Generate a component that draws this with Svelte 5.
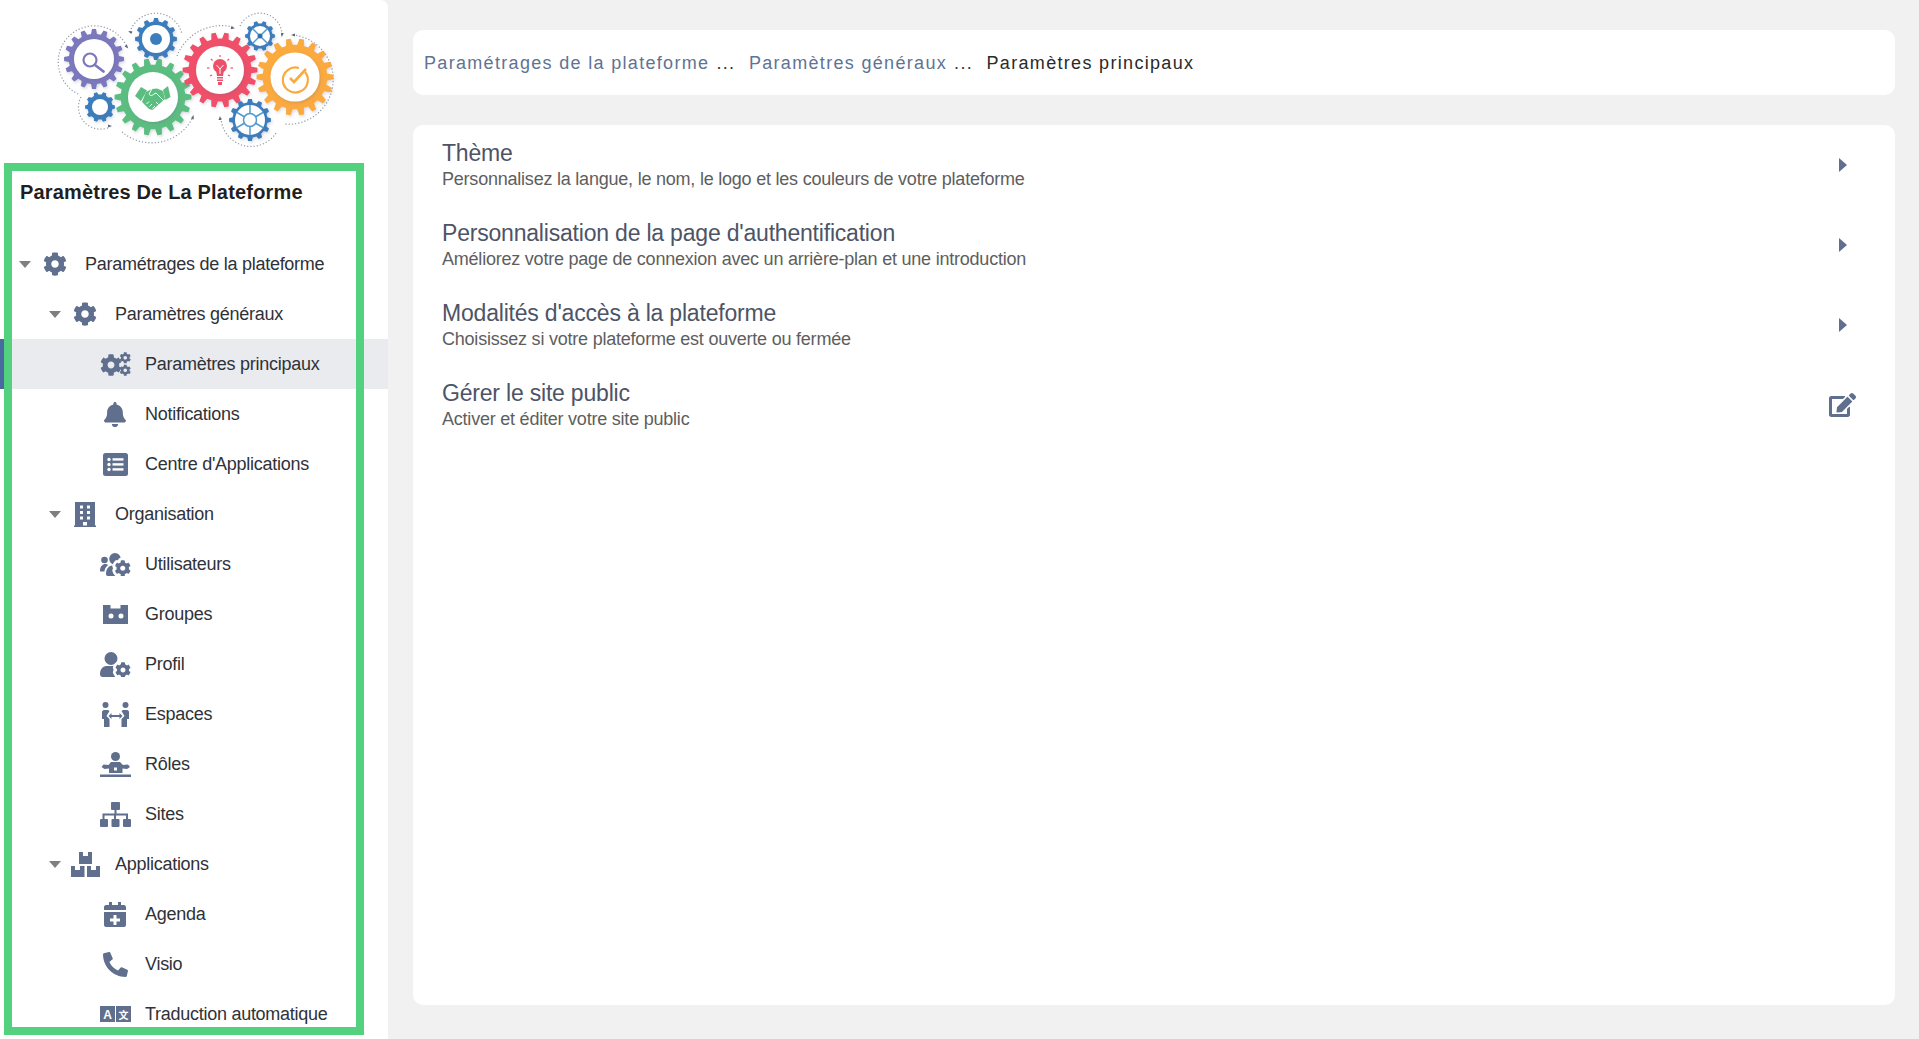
<script lang="ts">
    const COG = 'M487.4 315.7l-42.6-24.6c4.3-23.2 4.3-47 0-70.2l42.6-24.6c4.9-2.8 7.1-8.6 5.5-14-11.1-35.6-30-67.8-54.7-94.6-3.8-4.1-10-5.1-14.8-2.3L380.8 110c-17.9-15.4-38.5-27.3-60.8-35.1V25.8c0-5.6-3.9-10.5-9.4-11.7-36.7-8.2-74.3-7.8-109.2 0-5.5 1.2-9.4 6.1-9.4 11.7V75c-22.2 7.9-42.8 19.8-60.8 35.1L88.7 85.5c-4.9-2.8-11-1.9-14.8 2.3-24.7 26.7-43.6 58.9-54.7 94.6-1.7 5.4.6 11.2 5.5 14L67.3 221c-4.3 23.2-4.3 47 0 70.2l-42.6 24.6c-4.9 2.8-7.1 8.6-5.5 14 11.1 35.6 30 67.8 54.7 94.6 3.8 4.1 10 5.1 14.8 2.3l42.6-24.6c17.9 15.4 38.5 27.3 60.8 35.1v49.2c0 5.6 3.9 10.5 9.4 11.7 36.7 8.2 74.3 7.8 109.2 0 5.5-1.2 9.4-6.1 9.4-11.7v-49.2c22.2-7.9 42.8-19.8 60.8-35.1l42.6 24.6c4.9 2.8 11 1.9 14.8-2.3 24.7-26.7 43.6-58.9 54.7-94.6 1.5-5.5-.7-11.3-5.6-14.1zM256 336c-44.1 0-80-35.9-80-80s35.9-80 80-80 80 35.9 80 80-35.9 80-80 80z';
    const BELL = 'M224 512c35.32 0 63.97-28.65 63.97-64H160.03c0 35.35 28.65 64 63.97 64zm215.39-149.71c-19.32-20.76-55.47-51.99-55.47-154.29 0-77.7-54.48-139.9-127.94-155.16V32c0-17.67-14.32-32-31.98-32s-31.98 14.33-31.98 32v20.84C118.56 68.1 64.08 130.3 64.08 208c0 102.3-36.15 133.53-55.47 154.29-6 6.45-8.66 14.16-8.61 21.71.11 16.4 12.98 32 32.1 32h383.8c19.12 0 32-15.6 32.1-32 .05-7.55-2.61-15.27-8.61-21.71z';
    const PHONE = 'M497.39 361.8l-112-48a24 24 0 0 0-28 6.9l-49.6 60.6A370.66 370.66 0 0 1 130.6 204.11l60.6-49.6a23.94 23.94 0 0 0 6.9-28l-48-112A24.16 24.16 0 0 0 122.6.61l-104 24A24 24 0 0 0 0 48c0 256.5 207.9 464 464 464a24 24 0 0 0 23.4-18.6l24-104a24.29 24.29 0 0 0-14.01-27.6z';
    const EDIT = 'M402.6 83.2l90.2 90.2c3.8 3.8 3.8 10 0 13.8L274.4 405.6l-92.8 10.3c-12.4 1.4-22.9-9.1-21.5-21.5l10.3-92.8L388.8 83.2c3.8-3.8 10-3.8 13.8 0zm162-22.9l-48.8-48.8c-15.2-15.2-39.9-15.2-55.2 0l-35.4 35.4c-3.8 3.8-3.8 10 0 13.8l90.2 90.2c3.8 3.8 10 3.8 13.8 0l35.4-35.4c15.2-15.3 15.2-40 0-55.2zM384 346.2V448H64V128h229.8c3.2 0 6.2-1.3 8.5-3.5l40-40c7.6-7.6 2.2-20.5-8.5-20.5H48C21.5 64 0 85.5 0 112v352c0 26.5 21.5 48 48 48h352c26.5 0 48-21.5 48-48V306.2c0-10.7-12.9-16-20.5-8.5l-40 40c-2.2 2.3-3.5 5.3-3.5 8.5z';

    // small cog placed at x,y with the given size, in icon units
    function cog(x: number, y: number, size: number, halo = false) {
        const s = size / 512;
        const extra = halo ? ' stroke="#fff" stroke-width="170" paint-order="stroke"' : '';
        return `<path transform="translate(${x} ${y}) scale(${s})" d="${COG}"${extra}/>`;
    }

    const icons: Record<string, { w: number; h: number; body: string }> = {
        cog: { w: 24, h: 24, body: cog(0, 0, 24) },
        cogs: { w: 31, h: 24, body: cog(0, 2, 22) + cog(19.5, 0, 11.5) + cog(19.5, 12.5, 11.5) },
        bell: { w: 22, h: 25, body: `<path transform="scale(.049)" d="${BELL}"/>` },
        list: {
            w: 25, h: 23,
            body: `<rect width="25" height="23" rx="2.5"/><g fill="#fff"><circle cx="6" cy="6.5" r="1.7"/><circle cx="6" cy="11.5" r="1.7"/><circle cx="6" cy="16.5" r="1.7"/><rect x="9.5" y="5.2" width="11" height="2.4"/><rect x="9.5" y="10.2" width="11" height="2.4"/><rect x="9.5" y="15.2" width="11" height="2.4"/></g>`
        },
        building: {
            w: 22, h: 25,
            body: `<path fill-rule="evenodd" d="M1 0h20v23.500h1V25H0v-1.500h1zM6 3.500v3h3v-3zm7 0v3h3v-3zM6 9v3h3V9zm7 0v3h3V9zM6 14.500v3h3v-3zm7 0v3h3v-3zM9 20v3.500h4V20z"/>`
        },
        users: {
            w: 31, h: 23,
            body: `<circle cx="15" cy="5.800" r="5.800"/><circle cx="4.500" cy="7" r="3.300"/><path d="M0 18c0-5 3-7 5-7 1.500 0 2.500.6 3 1.200C5.500 14 4.500 16.500 4.500 18.500H1.500C.5 18.500 0 18.500 0 18zM6 21c0-5 3-8.500 6-8.500h6c1.500 0 3 .8 3.500 1.500L19 23H8c-1.500 0-2-.8-2-2z"/>` + cog(14.500, 7, 16.500, true)
        },
        groups: {
            w: 25, h: 19,
            body: `<path fill-rule="evenodd" d="M0 0h7.500v3.500h10V0H25v19H0zM8 8.500a2.500 2.500 0 1 0 0 5 2.500 2.500 0 0 0 0-5zm10 0a2.500 2.500 0 1 0 0 5 2.500 2.500 0 0 0 0-5z"/>`
        },
        profile: {
            w: 31, h: 25,
            body: `<circle cx="11" cy="6.500" r="6.500"/><path d="M0 22c0-5.500 3.500-8 7-8h8c2 0 3.500.5 4.500 1.500L17.500 25H2.500C1 25 0 24 0 22z"/>` + cog(15, 10, 16, true)
        },
        spaces: {
            w: 29, h: 25,
            body: `<circle cx="4.500" cy="3" r="3"/><circle cx="24.500" cy="3" r="3"/><path d="M1 10c0-1 1-2 2-2h4l1.500 1-3 5 3 3V25H3v-8H1zM28 10c0-1-1-2-2-2h-4l-1.500 1 3 5-3 3V25H26v-8h2z"/><path d="M7.500 14l3-3v2h8v-2l3 3-3 3v-2h-8v2z" stroke="#fff" stroke-width="1.200" paint-order="stroke"/>`
        },
        roles: {
            w: 31, h: 25,
            body: `<circle cx="15.500" cy="4.500" r="4.500"/><path d="M11 10h9l3 3 5-.5 2 2.500-3 2-4.500-.5V21H9v-4.500L4.500 17l-3-2 2-2.500 5 .5z"/><rect x="14" y="15.500" width="3" height="3" fill="#fff"/><rect y="22.500" width="31" height="2.500"/>`
        },
        sites: {
            w: 31, h: 25,
            body: `<rect x="11" width="9" height="8" rx="1"/><rect y="17" width="8" height="8" rx="1"/><rect x="11.500" y="17" width="8" height="8" rx="1"/><rect x="23" y="17" width="8" height="8" rx="1"/><path d="M14.500 8h2v3.500h11.500V17h-2v-3.500h-10V17h-2v-3.500h-9.500V17h-2v-5.500h12z"/>`
        },
        apps: {
            w: 29, h: 25,
            body: `<path d="M8 0h4v4h5V0h4v12H8zM0 14h4v4h5v-4h4.500v11H0zM16 14h4v4h5v-4h4v11H16z"/>`
        },
        agenda: {
            w: 22, h: 25,
            body: `<path fill-rule="evenodd" d="M5 0h3v3h6V0h3v3h3c1 0 2 1 2 2v3H0V5c0-1 1-2 2-2h3zM0 10h22v13c0 1-1 2-2 2H2c-1 0-2-1-2-2zm9.500 3v3.500H6v3h3.500V23h3v-3.500H16v-3h-3.500V13z"/>`
        },
        phone: { w: 25, h: 25, body: `<path transform="scale(.0488)" d="${PHONE}"/>` },
        translate: {
            w: 31, h: 16,
            body: `<rect width="15" height="16"/><rect x="16" width="15" height="16"/><text x="7.500" y="13" text-anchor="middle" fill="#fff" font-size="12" font-weight="700" font-family="Liberation Sans, sans-serif">A</text><text x="23.500" y="12.500" text-anchor="middle" fill="#fff" font-size="10" font-weight="700" font-family="Noto Sans CJK SC, sans-serif">文</text>`
        }
    };

    const tree = [
        { label: 'Paramétrages de la plateforme', level: 0, icon: 'cog', open: true },
        { label: 'Paramètres généraux', level: 1, icon: 'cog', open: true },
        { label: 'Paramètres principaux', level: 2, icon: 'cogs', active: true },
        { label: 'Notifications', level: 2, icon: 'bell' },
        { label: "Centre d'Applications", level: 2, icon: 'list' },
        { label: 'Organisation', level: 1, icon: 'building', open: true },
        { label: 'Utilisateurs', level: 2, icon: 'users' },
        { label: 'Groupes', level: 2, icon: 'groups' },
        { label: 'Profil', level: 2, icon: 'profile' },
        { label: 'Espaces', level: 2, icon: 'spaces' },
        { label: 'Rôles', level: 2, icon: 'roles' },
        { label: 'Sites', level: 2, icon: 'sites' },
        { label: 'Applications', level: 1, icon: 'apps', open: true },
        { label: 'Agenda', level: 2, icon: 'agenda' },
        { label: 'Visio', level: 2, icon: 'phone' },
        { label: 'Traduction automatique', level: 2, icon: 'translate' }
    ];

    const settings = [
        { title: 'Thème', desc: 'Personnalisez la langue, le nom, le logo et les couleurs de votre plateforme' },
        { title: "Personnalisation de la page d'authentification", desc: 'Améliorez votre page de connexion avec un arrière-plan et une introduction' },
        { title: "Modalités d'accès à la plateforme", desc: 'Choisissez si votre plateforme est ouverte ou fermée' },
        { title: 'Gérer le site public', desc: 'Activer et éditer votre site public', edit: true }
    ];

    function gearPath(cx: number, cy: number, R: number, teeth: number) {
        const root = R * 0.84;
        const step = (Math.PI * 2) / teeth;
        let d = '';
        for (let i = 0; i < teeth; i++) {
            const a = i * step;
            const pts = [
                [root, a - step * 0.3],
                [R, a - step * 0.17],
                [R, a + step * 0.17],
                [root, a + step * 0.3]
            ];
            for (const [r, t] of pts) {
                d += `${d ? 'L' : 'M'}${(cx + r * Math.cos(t)).toFixed(2)} ${(cy + r * Math.sin(t)).toFixed(2)}`;
            }
        }
        return d + 'Z';
    }

    const gears = [
        { x: 94, y: 59, R: 30, r: 20, n: 16, c: '#7b78bd' },
        { x: 156, y: 39, R: 21, r: 14, n: 12, c: '#3b7dbd' },
        { x: 100, y: 107, R: 15, r: 8, n: 10, c: '#3b7dbd' },
        { x: 153, y: 97, R: 38.500, r: 25, n: 18, c: '#5cbd80' },
        { x: 220, y: 70, R: 37.500, r: 24, n: 18, c: '#ef5069' },
        { x: 260, y: 36, R: 15, r: 10, n: 10, c: '#3b7dbd' },
        { x: 295, y: 77, R: 38.500, r: 24.500, n: 18, c: '#fbaa3f' },
        { x: 250, y: 120, R: 21, r: 15, n: 12, c: '#3b7dbd' }
    ];

    // dotted arcs round the gears
    const arcs = [
        'M78 94A36 36 0 1 1 127 47',
        'M130 32A27 27 0 0 1 182 34',
        'M81 97A22 22 0 0 0 110 127',
        'M122 132A46 46 0 0 0 193 117',
        'M177 56A48 48 0 0 1 233 27',
        'M240 26A22 22 0 0 1 282 35',
        'M293 35A44 44 0 0 1 284 124',
        'M221 118A30 30 0 0 0 276 133'
    ];

    // little arrow heads at the arc ends: x, y, rotation
    const heads = [
        [127, 47, 50], [130, 32, 200], [282, 35, 100], [293, 35, 180],
        [233, 28, 10], [193, 117, 290], [220, 118, 270], [110, 126, 0]
    ];

    const spokes6 = [0, 60, 120, 180, 240, 300].map((d) => (d + 30) * Math.PI / 180);
    const spokes4 = [45, 135, 225, 315].map((d) => d * Math.PI / 180);
</script>

<div class="page">
    <aside class="sidebar">
        <div class="logo">
            <svg width="388" height="163" viewBox="0 0 388 163">
                <defs>
                    <filter id="soft" x="-20%" y="-20%" width="140%" height="140%">
                        <feDropShadow dx="1" dy="1.500" stdDeviation="1.500" flood-color="#5b6b8c" flood-opacity=".25" />
                    </filter>
                </defs>
                <g fill="none" stroke="#8f98a8" stroke-width="1.200" stroke-dasharray="1.200 2">
                    {#each arcs as d}
                        <path {d} />
                    {/each}
                </g>
                {#each heads as [x, y, r]}
                    <path d="M-2 -1.500L2 0L-2 1.500Z" fill="#5c6577" transform="translate({x} {y}) rotate({r})" />
                {/each}
                {#each gears as g}
                    <path d={gearPath(g.x, g.y, g.R, g.n)} fill={g.c} filter="url(#soft)" />
                    <circle cx={g.x} cy={g.y} r={g.r} fill="#fff" filter="url(#soft)" />
                {/each}

                <circle cx="156" cy="39" r="6" fill="#3b7dbd" />

                <!-- spoked gears -->
                <g stroke="#4f9ad0" stroke-width="1.500">
                    {#each spokes4 as a}
                        <line x1="260" y1="36" x2={260 + 11 * Math.cos(a)} y2={36 + 11 * Math.sin(a)} />
                    {/each}
                    {#each spokes6 as a}
                        <line x1={250 + 6 * Math.cos(a)} y1={120 + 6 * Math.sin(a)} x2={250 + 15 * Math.cos(a)} y2={120 + 15 * Math.sin(a)} />
                    {/each}
                </g>
                <circle cx="260" cy="36" r="2.500" fill="#2f6ea9" />
                <circle cx="250" cy="120" r="6.500" fill="#fff" stroke="#4f9ad0" stroke-width="1.500" />

                <!-- magnifier -->
                <g fill="none" stroke="#7b78bd">
                    <circle cx="90" cy="60" r="6.500" stroke-width="2.200" />
                    <line x1="95" y1="65" x2="103.500" y2="71.500" stroke-width="2.800" stroke-linecap="round" />
                </g>

                <!-- handshake -->
                <path d="M135 96l6-9 6 3.500-6 10.500zM163 90l5-4 2.500 11-5 3z" fill="#5cbd80" />
                <path d="M146 92l6-3 5-.5 6 2.500 2 8-12.500 11-3.500-1-7-7z" fill="#5cbd80" />
                <g fill="none" stroke="#fff" stroke-width="1">
                    <path d="M152 89l-3 5c1 2 3 2 5 0l2-1 8 8" />
                    <path d="M146.500 104l2.500-2.500M149.500 106.500l2.500-2.500M152.500 108.500l2.500-2.500M156 102l2.500 2.500" />
                </g>

                <!-- bulb -->
                <g fill="#ef5069">
                    <circle cx="220" cy="66" r="7" />
                    <path d="M216 70h8l-1 6h-6z" />
                    <rect x="217" y="77" width="6" height="1.500" />
                    <rect x="217" y="79.500" width="6" height="1.500" />
                    <rect x="218" y="82" width="4" height="3" />
                </g>
                <g stroke="#ef5069" stroke-width="1.200">
                    <line x1="220" y1="55" x2="220" y2="57" />
                    <line x1="211" y1="59" x2="212.500" y2="60.500" />
                    <line x1="229" y1="59" x2="227.500" y2="60.500" />
                    <line x1="207" y1="68" x2="209.500" y2="68" />
                    <line x1="233" y1="68" x2="230.500" y2="68" />
                    <line x1="210" y1="76" x2="212" y2="75" />
                    <line x1="230" y1="76" x2="228" y2="75" />
                </g>
                <path d="M216.500 65l3.500 4 3.500-4M220 69v5" fill="none" stroke="#fff" stroke-width="1" />

                <!-- check -->
                <g fill="none" stroke="#fbaa3f">
                    <path d="M305 72A12.500 12.500 0 1 1 299 68" stroke-width="2.200" />
                    <path d="M290 78l4 4 12-13" stroke-width="2.600" />
                </g>
            </svg>
        </div>

        <h2 class="tree-title">Paramètres De La Plateforme</h2>

        <nav class="tree">
            {#each tree as item}
                <div class="row" class:active={item.active} style="padding-left: {19 + item.level * 30}px">
                    <span class="caret" class:open={item.open}></span>
                    <span class="row-icon">
                        <svg width={icons[item.icon].w} height={icons[item.icon].h} viewBox="0 0 {icons[item.icon].w} {icons[item.icon].h}" fill="#5f6f8d">
                            {@html icons[item.icon].body}
                        </svg>
                    </span>
                    <span class="row-label">{item.label}</span>
                </div>
            {/each}
        </nav>

        <div class="highlight"></div>
    </aside>

    <main class="content">
        <div class="breadcrumb">
            <span class="crumb">Paramétrages de la plateforme</span>
            <span class="dots">...</span>
            <span class="crumb">Paramètres généraux</span>
            <span class="dots">...</span>
            <span class="current">Paramètres principaux</span>
        </div>

        <section class="card">
            {#each settings as s}
                <div class="setting">
                    <div class="setting-text">
                        <div class="setting-title">{s.title}</div>
                        <div class="setting-desc">{s.desc}</div>
                    </div>
                    <div class="setting-action">
                        {#if s.edit}
                            <svg width="27" height="24" viewBox="0 0 576 512" fill="#5f6f8d"><path d={EDIT} /></svg>
                        {:else}
                            <span class="chevron"></span>
                        {/if}
                    </div>
                </div>
            {/each}
        </section>
    </main>
</div>

<style>
    :global(body) {
        background: #f1f1f1;
        font-family: "Liberation Sans", Arial, sans-serif;
    }
    .page {
        display: flex;
        height: 100vh;
        overflow: hidden;
    }
    .sidebar {
        position: relative;
        flex: 0 0 388px;
        background: #fff;
        border-radius: 0 8px 0 0;
        overflow: hidden;
    }
    .logo {
        height: 163px;
    }
    .logo svg {
        display: block;
    }
    .highlight {
        position: absolute;
        left: 4px;
        top: 163px;
        width: 344px;
        height: 856px;
        border: 8px solid #54d17f;
        pointer-events: none;
    }
    .tree-title {
        margin: 0;
        padding: 16px 0 0 20px;
        height: 60px;
        box-sizing: border-box;
        font-size: 20px;
        line-height: 26px;
        font-weight: 700;
        letter-spacing: 0.18px;
        color: #1f1f1f;
    }
    .tree {
        padding-top: 16px;
    }
    .row {
        display: flex;
        align-items: center;
        height: 50px;
        box-sizing: border-box;
    }
    .row.active {
        background: #e9ebef;
        box-shadow: inset 4px 0 0 #476a9f;
    }
    .caret {
        flex: 0 0 12px;
        height: 0;
        margin-right: 8px;
    }
    .caret.open {
        height: 0;
        width: 0;
        box-sizing: border-box;
        border-style: solid;
        border-width: 7px 6px 0;
        border-color: #7f7f7f transparent transparent;
    }
    .row-icon {
        flex: 0 0 32px;
        display: flex;
        justify-content: center;
        margin-right: 14px;
    }
    .row-icon svg {
        display: block;
    }
    .row-label {
        font-size: 18px;
        color: #2f3238;
        letter-spacing: -0.27px;
        white-space: nowrap;
    }
    .content {
        flex: 1;
        min-width: 0;
        display: flex;
        flex-direction: column;
        gap: 30px;
        padding: 30px 24px 34px 25px;
    }
    .breadcrumb {
        flex: 0 0 65px;
        box-sizing: border-box;
        display: flex;
        align-items: center;
        gap: 7px;
        padding: 2px 0 0 11px;
        background: #fff;
        border-radius: 10px;
        font-size: 18px;
        letter-spacing: 1.32px;
    }
    .crumb {
        color: #5f7393;
    }
    .dots {
        color: #333;
        margin-right: 6.500px;
    }
    .current {
        color: #2a2a2a;
    }
    .card {
        flex: 1;
        padding: 0 39px 0 29px;
        background: #fff;
        border-radius: 10px;
    }
    .setting {
        display: flex;
        align-items: center;
        justify-content: space-between;
        height: 80px;
    }
    .setting-text {
        padding-bottom: 2px;
    }
    .setting-title {
        font-size: 23px;
        line-height: 30px;
        color: #4d5466;
        letter-spacing: -0.2px;
    }
    .setting-desc {
        font-size: 18px;
        line-height: 22px;
        color: #5e5e5e;
        letter-spacing: -0.22px;
    }
    .setting-action {
        width: 27px;
        display: flex;
        justify-content: center;
    }
    .chevron {
        width: 0;
        height: 0;
        border-style: solid;
        border-width: 7px 0 7px 8px;
        border-color: transparent transparent transparent #5f6f8d;
    }
</style>
